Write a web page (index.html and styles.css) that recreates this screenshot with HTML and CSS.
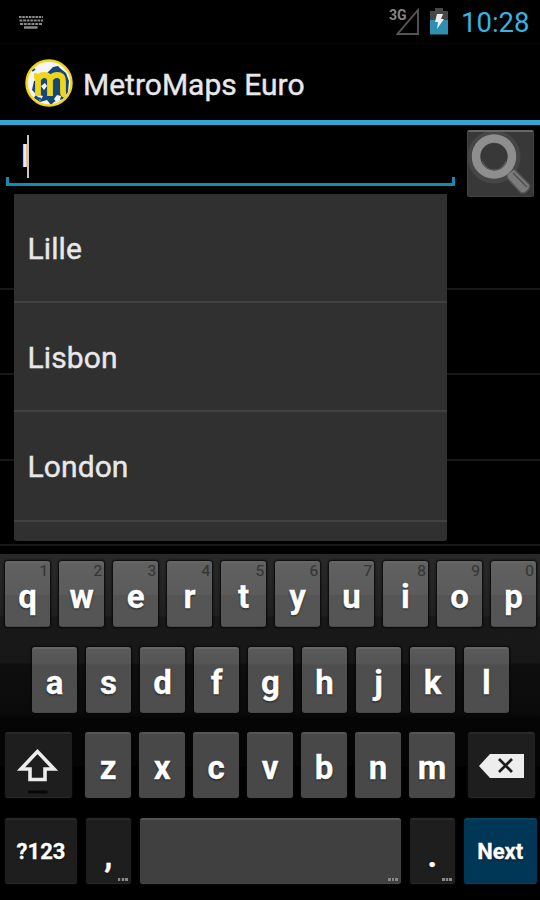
FILE: index.html
```
<!DOCTYPE html>
<html lang="en">
<head>
<meta charset="utf-8">
<title>MetroMaps Euro</title>
<link rel="stylesheet" href="styles.css">
</head>
<body>
<div class="screen">
  <header class="status">
    <svg class="kb-icon" width="26" height="14" viewBox="0 0 26 14"><g fill="none" stroke="#8a8a8a" stroke-width="2"><path d="M1 1H25" stroke-dasharray="2.5 .8"/><path d="M1.500 4.500H25" stroke-dasharray="2.8 .8"/><path d="M2 8H24" stroke-dasharray="3 .8"/><path d="M6 11.500H19.500" stroke-width="2.500"/></g></svg>
    <div class="signal"><span class="net">3G</span><svg width="24" height="28" viewBox="0 0 24 28"><path d="M1.500 26H22V2Z" fill="none" stroke="#555" stroke-width="1.900"/></svg></div>
    <svg class="battery" width="18" height="27" viewBox="0 0 18 27"><path d="M5 0h8v3h5v10H0V3h5z" fill="#484848"/><path d="M0 12h18v14.500H0z" fill="#2f8fb0"/><path d="M7 6h6l-2 5h3L7 21l1-7H5z" fill="#eee"/></svg>
    <span class="clock">10:28</span>
  </header>
  <div class="actionbar">
    <svg class="logo" width="50" height="50" viewBox="0 0 50 50">
      <circle cx="25" cy="25" r="23" fill="#f4f6f5"/>
      <path d="M24 14l5-5 5-1 3 3 5 4 3 8-1 11-5 7-9 3-3 3-4-5-7 2-6-4 2-4-4-4 2-9 8-2z" fill="#174779"/>
      <path d="M30 41l3-4 4 1-1 4-4 2zM12 36l7 2-3 5zM17 28l4-3 2 3-3 4z" fill="#f4f6f5"/>
      <path d="M8 13l3-2M14 40l3 1" stroke="#174779" stroke-width="2"/>
      <path d="M14 38V21q-1-3-4-3M14 22q1-5 6-5 6 0 6 6v15M26 22q2-5 7-5 6 0 6 6v11q0 3 3 3" fill="none" stroke="#efd51b" stroke-width="5.800"/>
      <circle cx="25" cy="25" r="22.500" fill="none" stroke="#f3d516" stroke-width="2.500"/>
    </svg>
    <h1 class="title">MetroMaps Euro</h1>
  </div>
  <main class="content">
    <div class="searchrow">
      <div class="field"><span class="typed">l</span><span class="caret"></span></div>
      <div class="search-btn"><svg width="66" height="66" viewBox="0 0 66 66">
        <circle cx="26" cy="25" r="20" fill="none" stroke="#505050" stroke-width="13" opacity=".6"/>
        <path d="M39 42l7-5 16 16-1 4-4 4-4 0-14-15z" fill="#7b7b7b" stroke="#505050" stroke-width="1.500" stroke-linejoin="round"/>
        <path d="M45 41l14 14" stroke="#505050" stroke-width="1.500"/>
        <circle cx="26" cy="24.500" r="18" fill="none" stroke="#8e8e8e" stroke-width="8.500"/>
        <path d="M14 29q4 9 12 9 9 0 12-9" fill="none" stroke="#555" stroke-width="1.500"/>
      </svg></div>
    </div>
    <div class="rows"><div class="row"></div><div class="row"></div><div class="row"></div><div class="row"></div></div>
    <div class="dropdown">
      <div class="option">Lille</div><div class="option">Lisbon</div><div class="option">London</div>
    </div>
  </main>
  <div class="keyboard">
    <div class="keys">
      <div class="key">q<small>1</small></div><div class="key">w<small>2</small></div><div class="key">e<small>3</small></div><div class="key">r<small>4</small></div><div class="key">t<small>5</small></div><div class="key">y<small>6</small></div><div class="key">u<small>7</small></div><div class="key">i<small>8</small></div><div class="key">o<small>9</small></div><div class="key">p<small>0</small></div>
    </div>
    <div class="keys second">
      <div class="key">a</div><div class="key">s</div><div class="key">d</div><div class="key">f</div><div class="key">g</div><div class="key">h</div><div class="key">j</div><div class="key">k</div><div class="key">l</div>
    </div>
    <div class="keys third">
      <div class="key dark shift"><svg width="67" height="66" viewBox="0 0 67 66"><path d="M32.500 19.500L16 37H25V47.500H40V37H49Z" fill="none" stroke="#ededed" stroke-width="3.600"/><path d="M23 60H42.500" stroke="#080808" stroke-width="3"/></svg></div>
      <div class="key">z</div><div class="key">x</div><div class="key">c</div><div class="key">v</div><div class="key">b</div><div class="key">n</div><div class="key">m</div>
      <div class="key dark del"><svg width="67" height="66" viewBox="0 0 67 66"><path d="M11 34L22 22H56V46H22Z" fill="#ededed"/><path d="M31 27L44 40M44 27L31 40" stroke="#1c1c1c" stroke-width="2.700"/></svg></div>
    </div>
    <div class="keys fourth">
      <div class="key dark label sym">?123</div>
      <div class="key dark punct">,<i class="more"></i></div>
      <div class="key space"><i class="more"></i></div>
      <div class="key dark punct">.<i class="more"></i></div>
      <div class="key label next">Next</div>
    </div>
  </div>
</div>
</body>
</html>
```
FILE: styles.css
```
* { box-sizing: border-box; }
body { margin: 0; background: #000; font-family: Roboto, "Liberation Sans", sans-serif; color: #e8e8e8; }
.screen { width: 540px; height: 900px; display: flex; flex-direction: column; overflow: hidden; background: #000; }
.status { height: 44px; flex: none; display: flex; align-items: center; padding: 0 11px 0 18px; border-bottom: 1px solid #060606; }
.kb-icon { margin-right: auto; margin-top: 2px; }
.signal { display: flex; align-items: flex-start; margin-right: 10px; }
.signal svg { margin: 0 0 0 -10px; }
.net { font-size: 14px; line-height: 14px; font-weight: 700; color: #858585; width: 17px; }
.battery { margin-right: 13px; }
.clock { font-size: 27.5px; line-height: 44px; padding-top: 2px; color: #33b5e5; width: 68px; white-space: nowrap; }
.actionbar { height: 81px; flex: none; display: flex; align-items: center; padding: 2px 0 0 24px; border-bottom: 5px solid #35a5d3; }
.title { margin: 3px 0 0 9px; font-size: 30px; font-weight: 400; line-height: 40px; white-space: nowrap; -webkit-text-stroke: .4px #e8e8e8; }
.content { position: relative; height: 429px; flex: none; }
.searchrow { height: 79px; display: flex; padding: 5px 6.500px 0 6px; justify-content: space-between; }
.field { width: 449px; height: 56px; display: flex; align-items: center; padding: 0 0 1px 15px; border-bottom: 3px solid #168ab0; background: linear-gradient(#168ab0, #168ab0) left bottom / 3px 6px no-repeat, linear-gradient(#168ab0, #168ab0) right bottom / 3px 6px no-repeat; }
.typed { font-size: 31px; font-weight: 500; width: 6px; }
.caret { width: 2px; height: 43px; background: #c5c5c5; }
.search-btn { width: 66.500px; height: 67px; border: 1px solid #424242; border-top: 2px solid #666; border-radius: 2px; background: #383838; overflow: hidden; }
.row { height: 85.500px; border-bottom: 2px solid #171717; }
.dropdown { position: absolute; left: 14px; top: 69px; width: 433px; height: 347px; overflow: hidden; background: #303030; border-radius: 0 0 3px 3px; }
.option { height: 109.200px; border-bottom: 2px solid #414141; padding-left: 13.500px; font-size: 30px; line-height: 109px; -webkit-text-stroke: .4px #e8e8e8; letter-spacing: .1px; }
.keyboard { flex: 1; padding: 7px 4px 0 5px; display: flex; flex-direction: column; gap: 19.600px; background: linear-gradient(#292929 0, #202020 62px, #191919 63px, #171717 109px, #0e0e0e 110px, #0b0b0b 158px, #050505 165px, #050505 212px, #000 213px); }
.keys { display: flex; height: 66px; gap: 8.800px; }
.second { padding-left: 27px; }
.key { position: relative; width: 45.200px; flex: none; border-radius: 3px; display: flex; align-items: center; justify-content: center; padding: 5px 0 0 0; font-size: 33px; line-height: 38px; font-weight: 700; color: #fff; background: linear-gradient(#616161, #5b5b5b 50%, #555 51%, #555); border-top: 2px solid #666; border-bottom: 1px solid #484848; text-shadow: 0 1px 2px #111; -webkit-text-stroke: .3px #fff; box-shadow: 0 0 2px 1px #080808; }
.key small { position: absolute; right: 2px; top: 0; font-size: 15.500px; line-height: 17px; font-weight: 400; color: #363636; text-shadow: none; -webkit-text-stroke: .2px #363636; }
.second .key { background: linear-gradient(#5a5a5a, #555 24%, #4e4e4e 25%, #4e4e4e); }
.third .key { background: #484848; border-top-color: #555; }
.keys .key.dark { background: #1e1e1e; border-color: #292929; }
.third .shift, .third .del { width: 67px; padding: 0; }
.shift { margin-right: 4.700px; }
.del { margin-left: 5px; }
.key svg { flex: none; margin-top: -2px; }
.key.sym { width: 72px; }
.fourth .space { width: 261.200px; background: #404040; border-top-color: #555; }
.key.label { font-size: 22px; padding-top: 2px; }
.fourth .next { width: 73px; background: #003656; border-color: #0c4058; }
.key.punct { padding-top: 9px; }
.more { position: absolute; right: 3px; bottom: 2px; width: 10px; height: 3px; background: repeating-linear-gradient(90deg, #888 0 2.500px, #333 2.500px 3.600px); }
```
